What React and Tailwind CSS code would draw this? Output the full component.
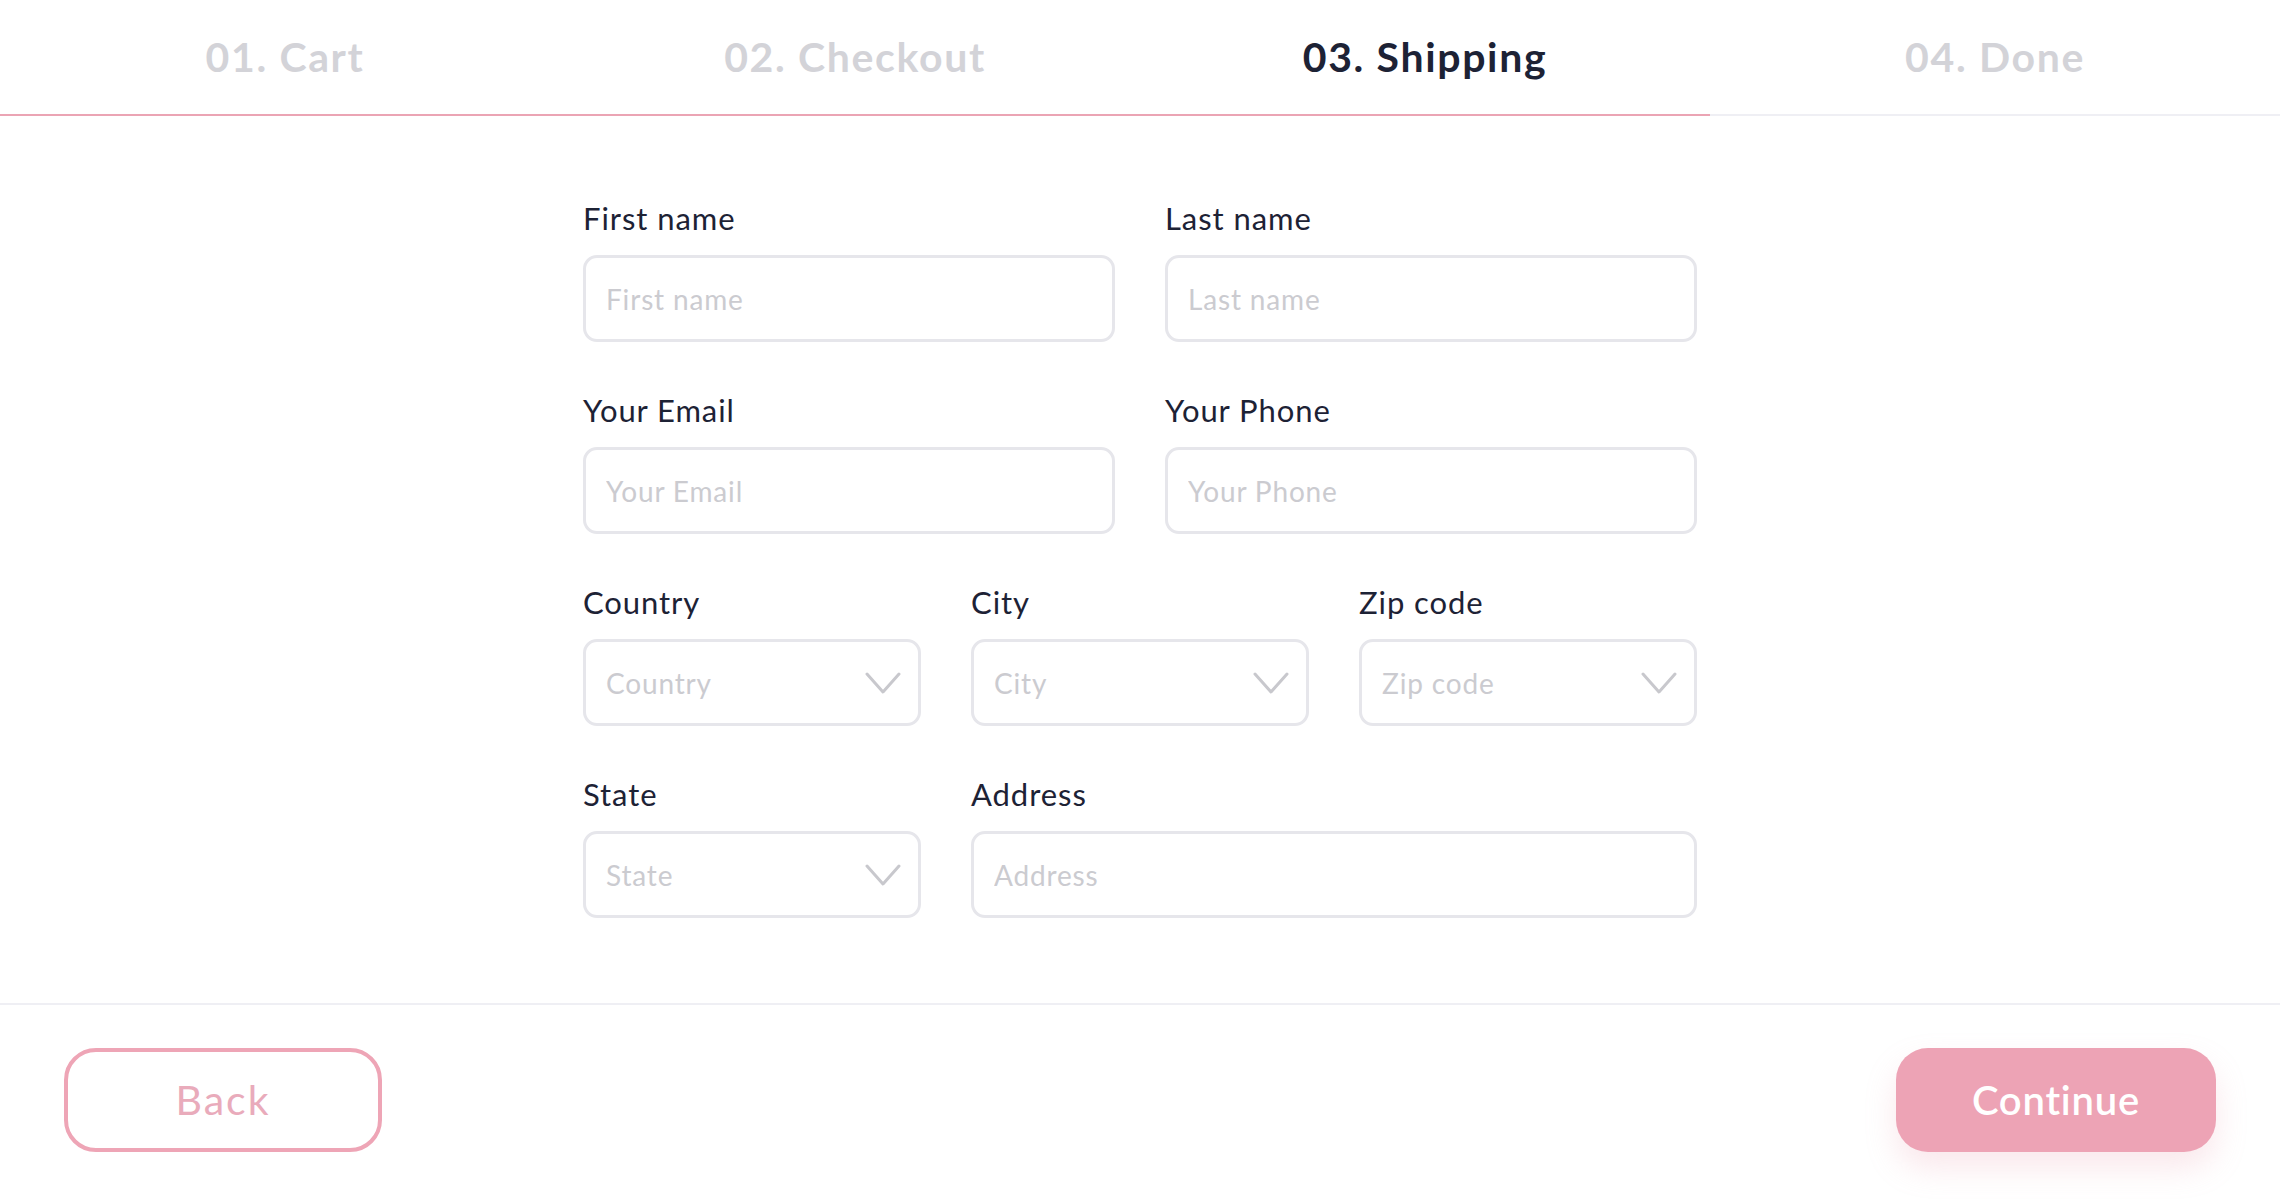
import React from "react";

const steps = [
  { label: "01. Cart", done: true },
  { label: "02. Checkout", done: true },
  { label: "03. Shipping", done: true, active: true },
  { label: "04. Done", done: false },
];

const Chevron = () => (
  <svg width="36" height="22" viewBox="0 0 36 22" fill="none" className="shrink-0">
    <polyline points="2,2 18,20 34,2" stroke="#c8c8cd" strokeWidth="3" strokeLinecap="round" strokeLinejoin="round" />
  </svg>
);

const Field = ({ label, select, className = "" }) => (
  <div className={"flex flex-col " + className}>
    <label className="text-[31px] leading-[37px] tracking-[0.03em] text-[#1d2235] mb-[18px]">{label}</label>
    <div className="h-[87px] border-[3px] border-[#e6e6eb] rounded-[14px] flex items-center pl-[20px] pr-[17px]">
      <input
        placeholder={label}
        className="flex-1 min-w-0 bg-transparent outline-none text-[28px] tracking-[0.03em] text-[#1d2235] placeholder:text-[#cbcbd0]"
      />
      {select && <Chevron />}
    </div>
  </div>
);

export default function App() {
  return (
    <div className="w-full min-h-[1200px] bg-white flex flex-col" style={{ fontFamily: "Lato, 'Open Sans', sans-serif" }}>
      <div className="grid grid-cols-4">
        {steps.map((s) => (
          <div
            key={s.label}
            className={
              "h-[116px] flex items-center justify-center border-b-2 " +
              (s.done ? "border-[#eba4b4]" : "border-[#efeff4]")
            }
          >
            <span className={"text-[41px] leading-[48px] font-bold tracking-[0.04em] " + (s.active ? "text-[#1d2235]" : "text-[#d3d3d8]")}>
              {s.label}
            </span>
          </div>
        ))}
      </div>

      <div className="pt-[84px] pb-[85px] flex justify-center">
        <div className="w-[1114px] flex flex-col gap-[50px]">
          <div className="grid grid-cols-2 gap-x-[50px]">
            <Field label="First name" />
            <Field label="Last name" />
          </div>
          <div className="grid grid-cols-2 gap-x-[50px]">
            <Field label="Your Email" />
            <Field label="Your Phone" />
          </div>
          <div className="grid grid-cols-3 gap-x-[50px]">
            <Field label="Country" select />
            <Field label="City" select />
            <Field label="Zip code" select />
          </div>
          <div className="grid grid-cols-3 gap-x-[50px]">
            <Field label="State" select />
            <Field label="Address" className="col-span-2" />
          </div>
        </div>
      </div>

      <div className="border-t-2 border-[#efeff4] px-[64px] pt-[43px] pb-[48px] flex justify-between">
        <button className="w-[318px] h-[104px] rounded-[32px] border-4 border-[#eea5b6] text-[#e9abbb] text-[41px] tracking-[0.05em]">
          Back
        </button>
        <button className="w-[320px] h-[104px] rounded-[32px] bg-[#eda3b5] text-white text-[40px] font-semibold tracking-[0.02em] shadow-[0_16px_30px_rgba(237,163,181,0.25)]">
          Continue
        </button>
      </div>
    </div>
  );
}
